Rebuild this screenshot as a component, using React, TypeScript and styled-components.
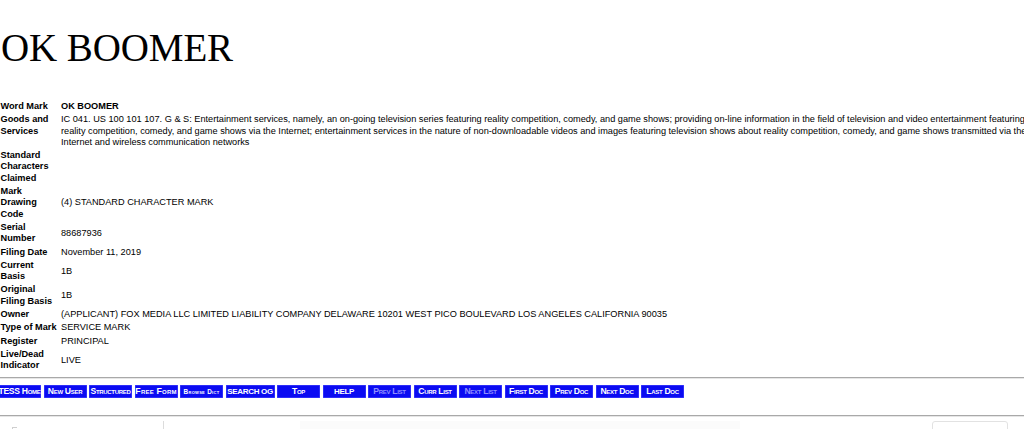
import React from 'react';
import styled, { createGlobalStyle } from 'styled-components';

const GlobalStyle = createGlobalStyle`
  html, body {
    margin: 0;
    padding: 0;
    background: #ffffff;
    overflow: hidden;
  }
  body {
    font-family: "Liberation Sans", Arial, sans-serif;
    color: #000;
  }
`;

const Page = styled.div`
  width: 1100px;
  height: 429px;
  display: flex;
  flex-direction: column;
`;

const Title = styled.h1`
  margin: 26px 0 0 1px;
  font-family: "Liberation Serif", "Times New Roman", serif;
  font-weight: normal;
  font-size: 39px;
  line-height: 44px;
  letter-spacing: -0.1px;
`;

const Details = styled.div`
  margin-top: 31px;
  display: grid;
  grid-template-columns: 58px 980px;
  column-gap: 3px;
  row-gap: 2px;
  font-size: 9.2px;
  line-height: 11.3px;
`;

const Label = styled.div`
  font-weight: bold;
  align-self: start;
  padding-left: 0.5px;
`;

const Value = styled.div<{ $strong?: boolean }>`
  align-self: center;
  font-weight: ${(p) => (p.$strong ? 'bold' : 'normal')};
`;

const Rule = styled.hr<{ $top: number }>`
  margin: ${(p) => p.$top}px 0 0 0;
  height: 0;
  border: none;
  border-top: 1px solid #a9a9a9;
  border-bottom: 1px solid #e6e6e6;
`;

const NavBar = styled.div`
  margin: 6px 0 0 -2px;
  display: flex;
  gap: 2.5px;
  height: 13px;
`;

type Kind = 'caps' | 'upper' | 'wide' | 'tiny';

const sizes: Record<Kind, string> = {
  caps: '8.6px',
  upper: '8px',
  wide: '8.8px',
  tiny: '6.4px',
};

const NavButton = styled.a<{ $kind: Kind; $dim?: boolean; $wide?: boolean }>`
  width: ${(p) => (p.$wide ? 49 : 43)}px;
  height: 13px;
  flex: none;
  display: flex;
  align-items: center;
  justify-content: center;
  background: #0b0bf2;
  box-shadow: inset 0 0 0 0.5px #5050ff;
  color: ${(p) => (p.$dim ? '#8f8fff' : '#ffffff')};
  font-weight: bold;
  white-space: nowrap;
  overflow: hidden;
  letter-spacing: ${(p) => (p.$kind === 'tiny' ? '0.3px' : p.$kind === 'wide' ? '0.2px' : '-0.3px')};
  font-variant: ${(p) => (p.$kind === 'upper' ? 'normal' : 'small-caps')};
  font-size: ${(p) => sizes[p.$kind]};
`;

const Footer = styled.div`
  margin-top: 4px;
  flex: 1;
  display: flex;
  align-items: flex-start;
  padding-left: 12px;
`;

const Handle = styled.span`
  width: 4px;
  height: 4px;
  margin-top: 6px;
  border-top: 1px solid #cfcfcf;
  border-left: 1px solid #cfcfcf;
`;

const Divider = styled.span`
  width: 1px;
  height: 12px;
  margin-left: 146px;
  background: #dcdcdc;
`;

const Shade = styled.span`
  width: 440px;
  height: 12px;
  margin-left: 136px;
  background: #fbfbfb;
`;

const Box = styled.span`
  width: 74px;
  height: 14px;
  margin-left: 192px;
  border: 1px solid #e2e2e2;
  border-radius: 3px;
`;

const rows: { label: string; value: string; strong?: boolean }[] = [
  { label: 'Word Mark', value: 'OK BOOMER', strong: true },
  {
    label: 'Goods and Services',
    value:
      'IC 041. US 100 101 107. G & S: Entertainment services, namely, an on-going television series featuring reality competition, comedy, and game shows; providing on-line information in the field of television and video entertainment featuring reality competition, comedy, and game shows via the Internet; entertainment services in the nature of non-downloadable videos and images featuring television shows about reality competition, comedy, and game shows transmitted via the Internet and wireless communication networks',
  },
  { label: 'Standard Characters Claimed', value: '' },
  { label: 'Mark Drawing Code', value: '(4) STANDARD CHARACTER MARK' },
  { label: 'Serial Number', value: '88687936' },
  { label: 'Filing Date', value: 'November 11, 2019' },
  { label: 'Current Basis', value: '1B' },
  { label: 'Original Filing Basis', value: '1B' },
  {
    label: 'Owner',
    value:
      '(APPLICANT) FOX MEDIA LLC LIMITED LIABILITY COMPANY DELAWARE 10201 WEST PICO BOULEVARD LOS ANGELES CALIFORNIA 90035',
  },
  { label: 'Type of Mark', value: 'SERVICE MARK' },
  { label: 'Register', value: 'PRINCIPAL' },
  { label: 'Live/Dead Indicator', value: 'LIVE' },
];

const buttons: { text: string; kind: Kind; dim?: boolean; wide?: boolean }[] = [
  { text: 'TESS Home', kind: 'caps' },
  { text: 'New User', kind: 'caps' },
  { text: 'Structured', kind: 'caps' },
  { text: 'Free Form', kind: 'wide' },
  { text: 'Browse Dict', kind: 'tiny' },
  { text: 'SEARCH OG', kind: 'upper', wide: true },
  { text: 'Top', kind: 'caps' },
  { text: 'HELP', kind: 'upper' },
  { text: 'Prev List', kind: 'caps', dim: true },
  { text: 'Curr List', kind: 'caps' },
  { text: 'Next List', kind: 'caps', dim: true },
  { text: 'First Doc', kind: 'caps' },
  { text: 'Prev Doc', kind: 'caps' },
  { text: 'Next Doc', kind: 'caps' },
  { text: 'Last Doc', kind: 'caps' },
];

const App = () => {
  return (
    <>
      <GlobalStyle />
      <Page>
        <Title>OK BOOMER</Title>
        <Details>
          {rows.map((r) => (
            <React.Fragment key={r.label}>
              <Label>{r.label}</Label>
              <Value $strong={r.strong}>{r.value}</Value>
            </React.Fragment>
          ))}
        </Details>
        <Rule $top={5} />
        <NavBar>
          {buttons.map((b) => (
            <NavButton key={b.text} $kind={b.kind} $dim={b.dim} $wide={b.wide}>
              {b.text}
            </NavButton>
          ))}
        </NavBar>
        <Rule $top={17} />
        <Footer>
          <Handle />
          <Divider />
          <Shade />
          <Box />
        </Footer>
      </Page>
    </>
  );
};

export default App;
